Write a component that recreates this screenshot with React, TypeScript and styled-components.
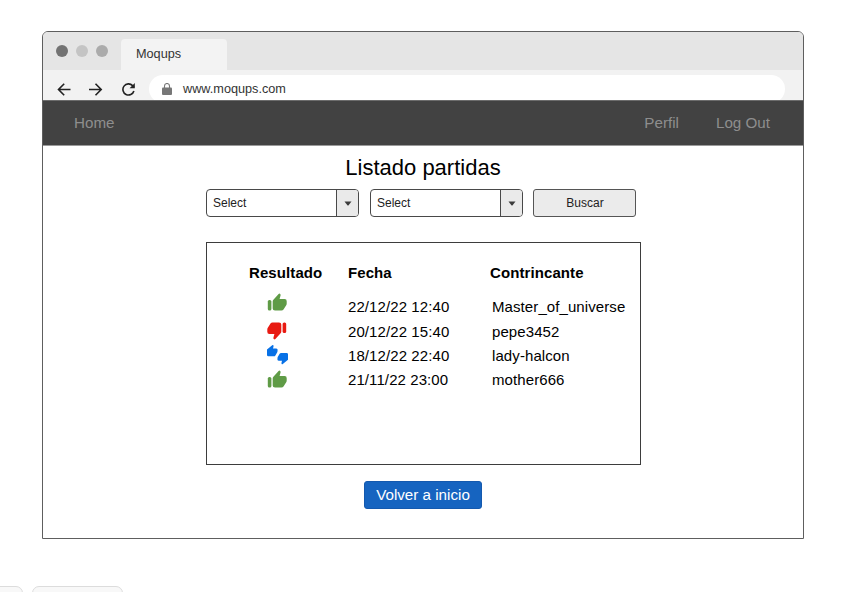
import React from "react";
import styled, { createGlobalStyle } from "styled-components";

const GlobalStyle = createGlobalStyle`
  * { box-sizing: border-box; }
  body { margin: 0; background: #fff; overflow: hidden; font-family: "Liberation Sans", Arial, sans-serif; color: #000; }
  button { font-family: inherit; margin: 0; }
`;

const Page = styled.div`
  display: flex;
  flex-direction: column;
  height: 592px;
  padding: 31px 0 0 42px;
  overflow: hidden;
`;

const BrowserWindow = styled.div`
  display: flex;
  flex-direction: column;
  width: 762px;
  height: 508px;
  flex: none;
  border: 1px solid #5e5e5e;
  border-radius: 6px 6px 0 0;
  overflow: hidden;
`;

const TabStrip = styled.div`
  display: flex;
  align-items: flex-end;
  height: 38px;
  flex: none;
  background: #e5e5e5;
`;

const WindowDots = styled.div`
  display: flex;
  gap: 8px;
  width: 78px;
  padding: 0 0 13px 13px;
`;

const Dot = styled.span<{ $color: string }>`
  width: 12px;
  height: 12px;
  border-radius: 50%;
  background: ${(p) => p.$color};
`;

const Tab = styled.div`
  width: 106px;
  height: 31px;
  padding-left: 15px;
  border-radius: 4px 4px 0 0;
  background: #f3f3f3;
  color: #333;
  font-size: 12.7px;
  line-height: 30px;
`;

const AddressRow = styled.div`
  display: flex;
  height: 30px;
  flex: none;
  background: #f2f2f2;
  overflow: hidden;
`;

const NavIcons = styled.div`
  display: flex;
  align-items: center;
  gap: 17px;
  width: 106px;
  padding: 8px 0 0 14px;
  height: 30px;
`;

const AddressBar = styled.div`
  display: flex;
  align-items: center;
  width: 636px;
  height: 28px;
  margin-top: 5px;
  padding: 0 0 1px 13px;
  border-radius: 14px;
  background: #fff;
  color: #333;
  font-size: 12.7px;
`;

const Url = styled.span`
  margin-left: 11px;
`;

const Navbar = styled.nav`
  display: flex;
  align-items: center;
  justify-content: space-between;
  height: 46px;
  flex: none;
  padding: 0 32px 1px 31px;
  border-top: 1px solid #6c6c6c;
  border-bottom: 1px solid #9a9a9a;
  background: #424242;
  color: #8e8e8e;
  font-size: 15.2px;
`;

const NavGroup = styled.div`
  display: flex;
  gap: 37px;
  margin-right: 1px;
`;

const Content = styled.main`
  display: flex;
  flex-direction: column;
  align-items: center;
  width: 435px;
  margin-left: 163px;
`;

const Title = styled.h1`
  margin: 6px 1px 0 0;
  height: 37px;
  font-size: 22px;
  font-weight: 400;
  line-height: 31px;
`;

const Filters = styled.div`
  display: flex;
  gap: 11px;
  width: 100%;
  height: 28px;
`;

const SelectBox = styled.div`
  display: flex;
  justify-content: space-between;
  width: 153px;
  border: 1px solid #494949;
  border-radius: 4px;
  overflow: hidden;
  color: #222;
  font-size: 12px;
  line-height: 26px;
  padding-left: 6px;
`;

const SelectArrow = styled.span`
  display: flex;
  align-items: center;
  justify-content: center;
  width: 22px;
  border-left: 1px solid #494949;
  background: #eaeaea;
`;

const SearchButton = styled.button`
  width: 103px;
  margin-left: -1px;
  padding: 0 0 0 1px;
  border: 1px solid #555;
  border-radius: 3px;
  background: #ebebeb;
  color: #222;
  font-size: 12px;
`;

const ResultsPanel = styled.section`
  width: 435px;
  height: 223px;
  margin-top: 25px;
  padding: 20px 0 0 42px;
  border: 1px solid #3d3d3d;
`;

const Row = styled.div<{ $height: number; $header?: boolean }>`
  display: grid;
  grid-template-columns: 99px 144px 1fr;
  height: ${(p) => p.$height}px;
  font-size: 15px;
  line-height: 20px;
  white-space: nowrap;
  font-weight: ${(p) => (p.$header ? 700 : 400)};
`;

const Cell = styled.span<{ $shift?: number }>`
  margin-left: ${(p) => p.$shift ?? 0}px;
  letter-spacing: 0.09px;
`;

const IconCell = styled.span<{ $top: number }>`
  height: 20px;
  padding-left: 18px;
  margin-top: ${(p) => p.$top}px;
  line-height: 0;
`;

const BackButton = styled.button`
  width: 118px;
  height: 28px;
  margin: 16px 1px 0 0;
  padding: 0 0 2px;
  border: 1px solid #1459ae;
  border-radius: 3px;
  background: #1664c0;
  color: #fff;
  font-size: 15.2px;
  white-space: nowrap;
`;

const BottomTabs = styled.div`
  display: flex;
  gap: 9px;
  margin: 47px 0 0 -50px;
`;

const BottomTab = styled.div<{ $width: number }>`
  width: ${(p) => p.$width}px;
  height: 20px;
  border: 1px solid #dcdcdc;
  border-radius: 7px 7px 0 0;
  background: #f8f8f8;
`;

const HAND =
  "M5.7 8.6Q5.7 7.5 6.4 6.8L11.6 1Q12.4.2 13.2.9 13.8 1.5 13.6 2.3L12.6 6h5Q19.8 6.1 19.7 8.3v2.1q0 1-.5 1.8l-2.7 4.2q-.7 1.1-2 1.1H8q-2.3 0-2.3-2.1z";

type Outcome = "win" | "loss" | "draw";

function OutcomeIcon({ outcome }: { outcome: Outcome }) {
  if (outcome === "draw") {
    return (
      <svg width="21" height="20" viewBox="0 0 21 20" fill="#0871e6">
        <path d="M0 4.4L5.2.2Q5.8-.2 6.3.3q.4.5.2 1.1L6 3.4h3.3q1.5.2 1.3 1.6l-.2 1.9-2 3.5q-.5.9-1.5.9H1.4Q0 11.3 0 9.9z" />
        <path d="M21 14.8l-5.2 4.2q-.6.4-1.1-.1-.4-.5-.2-1.1l.5-2h-3.3q-1.5-.2-1.3-1.6l.2-1.9 2-3.5q.5-.9 1.5-.9h5.5q1.4 0 1.4 1.4z" />
      </svg>
    );
  }
  const win = outcome === "win";
  return (
    <svg width="20" height="18" viewBox="0 0 20 18" fill={win ? "#5f9b46" : "#e81a12"}>
      <g transform={win ? undefined : "rotate(180 10 9)"}>
        <path d={HAND} />
        <rect x=".8" y="7" width="3.6" height="10.5" rx="1.6" />
      </g>
    </svg>
  );
}

const Caret = () => (
  <svg width="8" height="5" viewBox="0 0 8 5">
    <path d="M.5.5h7L4.6 4.2q-.6.6-1.2 0z" fill="#3c3c3c" />
  </svg>
);

const rows: { outcome: Outcome; date: string; rival: string; height: number; top: number }[] = [
  { outcome: "win", date: "22/12/22 12:40", rival: "Master_of_universe", height: 25, top: -4 },
  { outcome: "loss", date: "20/12/22 15:40", rival: "pepe3452", height: 24, top: 0 },
  { outcome: "draw", date: "18/12/22 22:40", rival: "lady-halcon", height: 24, top: -1 },
  { outcome: "win", date: "21/11/22 23:00", rival: "mother666", height: 24, top: 0 },
];

export default function App() {
  return (
    <>
      <GlobalStyle />
      <Page>
        <BrowserWindow>
          <TabStrip>
            <WindowDots>
              <Dot $color="#727272" />
              <Dot $color="#c4c4c4" />
              <Dot $color="#ababab" />
            </WindowDots>
            <Tab>Moqups</Tab>
          </TabStrip>
          <AddressRow>
            <NavIcons>
              <svg width="15" height="14" viewBox="0 0 15 14" fill="none" stroke="#222" strokeWidth="1.6">
                <path d="M13.5 7.5H1.8M7.2 1.7L1.5 7.5l5.7 5.8" />
              </svg>
              <svg width="15" height="14" viewBox="0 0 15 14" fill="none" stroke="#222" strokeWidth="1.6">
                <path d="M0 7.5h11.9M6.5 1.7L12.2 7.5l-5.7 5.8" />
              </svg>
              <svg width="15" height="14" viewBox="0 0 15 14" fill="none" stroke="#222" strokeWidth="1.6">
                <path d="M12.9 9A5.6 5.6 0 1 1 11.6 3.6L13 4.9" />
                <path d="M13.8 1.1v5.2H8.6z" fill="#222" stroke="none" />
              </svg>
            </NavIcons>
            <AddressBar>
              <svg width="10" height="12" viewBox="0 0 10 12">
                <path d="M2.5 5V3a2.5 2.5 0 0 1 5 0v2" fill="none" stroke="#777" strokeWidth="1.1" />
                <rect y="4.4" width="10" height="7.6" rx="1" fill="#777" />
              </svg>
              <Url>www.moqups.com</Url>
            </AddressBar>
          </AddressRow>
          <Navbar>
            <span>Home</span>
            <NavGroup>
              <span>Perfil</span>
              <span>Log Out</span>
            </NavGroup>
          </Navbar>
          <Content>
            <Title>Listado partidas</Title>
            <Filters>
              <SelectBox>
                Select
                <SelectArrow><Caret /></SelectArrow>
              </SelectBox>
              <SelectBox>
                Select
                <SelectArrow><Caret /></SelectArrow>
              </SelectBox>
              <SearchButton>Buscar</SearchButton>
            </Filters>
            <ResultsPanel>
              <Row $height={34} $header>
                <Cell>Resultado</Cell>
                <Cell>Fecha</Cell>
                <Cell $shift={-2}>Contrincante</Cell>
              </Row>
              {rows.map((row) => (
                <Row key={row.date} $height={row.height}>
                  <IconCell $top={row.top}>
                    <OutcomeIcon outcome={row.outcome} />
                  </IconCell>
                  <Cell>{row.date}</Cell>
                  <Cell>{row.rival}</Cell>
                </Row>
              ))}
            </ResultsPanel>
            <BackButton>Volver a inicio</BackButton>
          </Content>
        </BrowserWindow>
        <BottomTabs>
          <BottomTab $width={31} />
          <BottomTab $width={91} />
        </BottomTabs>
      </Page>
    </>
  );
}
